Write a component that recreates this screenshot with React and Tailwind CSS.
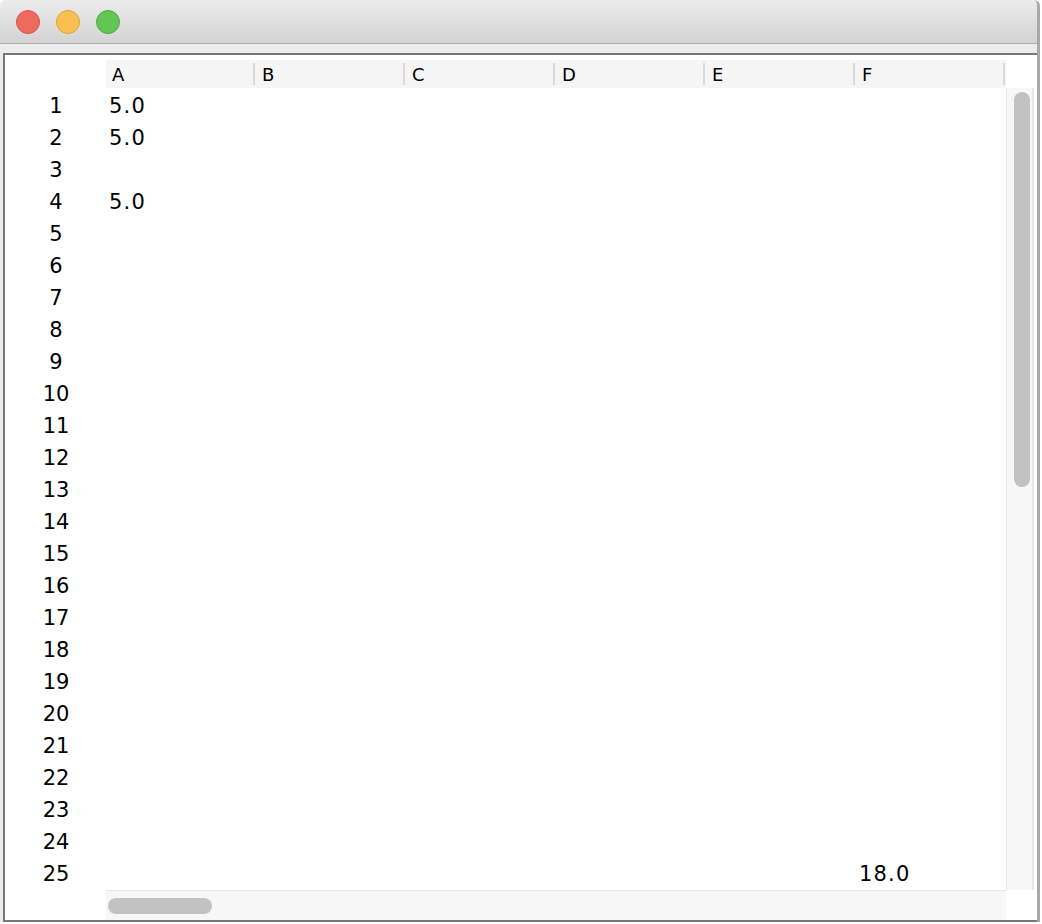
import React from 'react'

const columns = ['A', 'B', 'C', 'D', 'E', 'F']

const cells = {
  '1-A': '5.0',
  '2-A': '5.0',
  '4-A': '5.0',
  '25-F': '18.0'
}

const rows = Array.from({ length: 25 }, (_, i) => i + 1)

function TrafficLights() {
  return (
    <div className="flex items-center gap-[16px] pl-[16px]">
      <span className="w-[24px] h-[24px] rounded-full bg-[#ee6a5e] border border-[#d9544a]" />
      <span className="w-[24px] h-[24px] rounded-full bg-[#f6bf50] border border-[#dea53c]" />
      <span className="w-[24px] h-[24px] rounded-full bg-[#62c554] border border-[#4eaa42]" />
    </div>
  )
}

export default function App() {

  return (
    <div className="w-[1042px] h-[924px] bg-white font-['DejaVu_Sans',sans-serif] text-black overflow-hidden">

      <div className="w-[1040px] h-[922px] flex flex-col rounded-t-[6px] overflow-hidden border-r-[3px] border-[#a9a9a9] bg-[#ececec]">

        {/* title bar */}
        <div className="h-[44px] shrink-0 flex items-center bg-gradient-to-b from-[#ececec] to-[#d3d3d3] border-b border-[#b1b1b1]">
          <TrafficLights />
        </div>

        <div className="h-[9px] shrink-0 bg-[#ececec]" />

        {/* table frame */}
        <div className="flex-1 ml-[3px] flex flex-col bg-white border-l-2 border-t-2 border-b-2 border-[#777777]">

          <div className="h-[5px]" />

          {/* column header */}
          <div className="h-[28px] flex">
            <div className="w-[101px]" />
            <div className="w-[900px] flex bg-[#f5f5f5]">
              {columns.map(c => (
                <div key={c} className="w-[150px] flex items-center">
                  <span className="flex-1 pl-[6px] pt-[1px] text-[18px] leading-none">
                    {c}
                  </span>
                  <span className="w-[2px] h-[22px] bg-[#dadada] mr-[1px]" />
                </div>
              ))}
            </div>
          </div>

          {/* body */}
          <div className="flex h-[802px]">

            <div className="w-[101px] pl-[1px]">
              {rows.map(r => (
                <div key={r} className="h-[32px] pt-[6px] flex items-center justify-center text-[21px]">
                  {r}
                </div>
              ))}
            </div>

            <div className="w-[900px]">
              {rows.map(r => (
                <div key={r} className="h-[32px] flex">
                  {columns.map(c => (
                    <div
                      key={c}
                      className="w-[150px] pt-[6px] flex items-center pl-[3px] text-[21px] tracking-[1.2px]"
                    >
                      {cells[`${r}-${c}`] || ''}
                    </div>
                  ))}
                </div>
              ))}
            </div>

            {/* vertical scrollbar */}
            <div className="w-[28px] bg-[#f7f7f7] border-l border-r-2 border-[#e6e6e6] pt-[4px] pl-[7px]">
              <div className="w-[16px] h-[395px] rounded-full bg-[#c2c2c2]" />
            </div>

          </div>

          {/* horizontal scrollbar */}
          <div className="flex-1 flex">
            <div className="w-[101px]" />
            <div className="w-[900px] bg-[#f7f7f7] border-t border-[#e6e6e6] pt-[7px] pl-[2px]">
              <div className="w-[104px] h-[16px] rounded-full bg-[#c2c2c2]" />
            </div>
          </div>

        </div>

      </div>

    </div>
  )
}
